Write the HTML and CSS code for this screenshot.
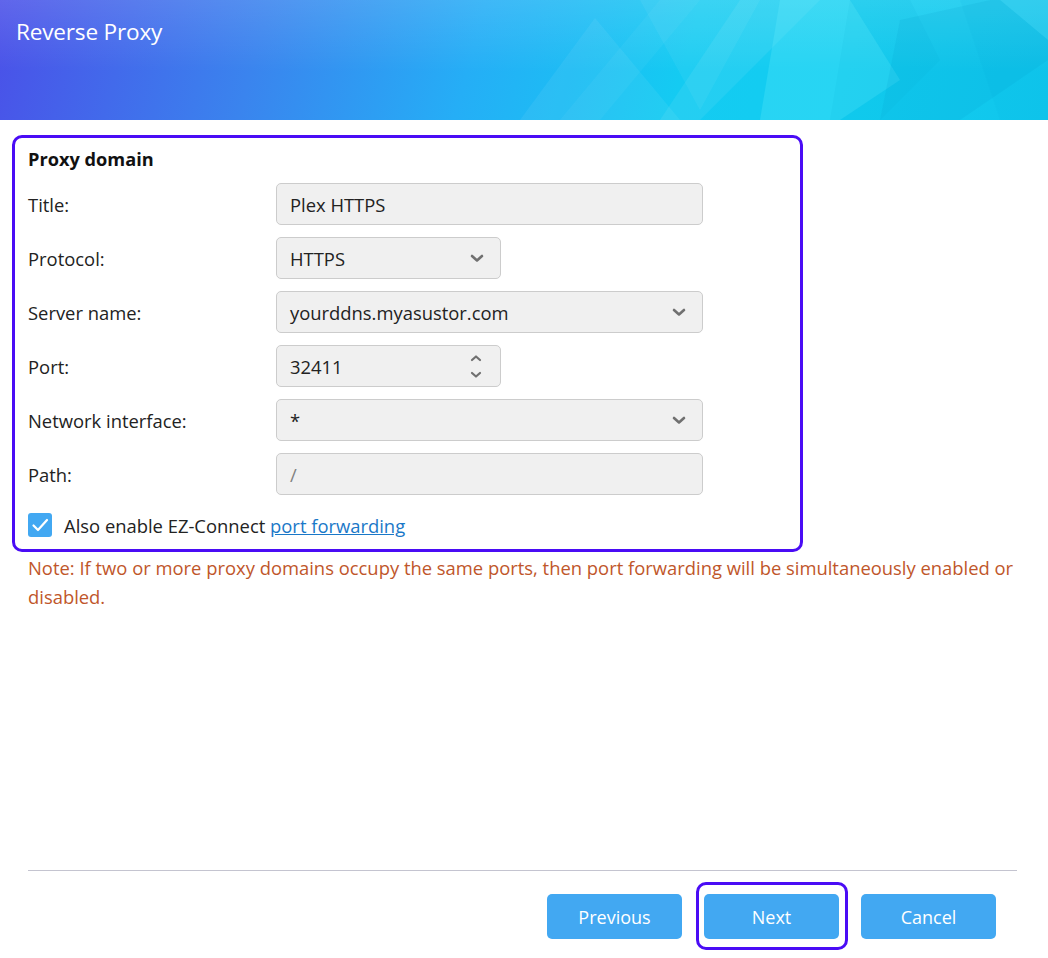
FILE: index.html
```html
<!DOCTYPE html>
<html>
<head>
<meta charset="utf-8">
<link rel="stylesheet" href="styles.css">
</head>
<body>
<div class="dialog">
  <header class="header">
    <svg class="header-art" width="1048" height="120" viewBox="0 0 1048 120" aria-hidden="true">
      <polygon points="595,18 520,120 680,120" fill="#ffffff" opacity="0.06"/>
      <polygon points="640,0 760,0 700,110" fill="#ffffff" opacity="0.05"/>
      <polygon points="740,0 820,0 700,120 660,120" fill="#ffffff" opacity="0.07"/>
      <polygon points="780,0 850,0 900,80 840,120 760,120" fill="#7ff6ff" opacity="0.20"/>
      <polygon points="850,0 910,0 940,60 880,120 830,120" fill="#00a0d0" opacity="0.08"/>
      <polygon points="900,20 990,0 1048,0 1048,60 960,120 880,120" fill="#0090c8" opacity="0.12"/>
      <polygon points="960,0 1048,0 1048,120 1000,120" fill="#00a8d8" opacity="0.08"/>
      <polygon points="1000,0 1048,0 1048,40" fill="#60e8ff" opacity="0.25"/>
      <polygon points="700,0 600,120 560,120 660,0" fill="#ffffff" opacity="0.04"/>
    </svg>
    <h1 class="title">Reverse Proxy</h1>
  </header>

  <main class="content">
    <section class="panel">
      <h2 class="panel-title">Proxy domain</h2>
      <div class="form">
        <div class="row">
          <label class="label">Title:</label>
          <div class="field wide"><span class="value">Plex HTTPS</span></div>
        </div>
        <div class="row">
          <label class="label">Protocol:</label>
          <div class="field narrow"><span class="value">HTTPS</span>
            <svg class="chev" width="14" height="9" viewBox="0 0 14 9"><path d="M2 2 L7 6.5 L12 2" fill="none" stroke="#707070" stroke-width="2.6" stroke-linecap="round" stroke-linejoin="round"/></svg>
          </div>
        </div>
        <div class="row">
          <label class="label">Server name:</label>
          <div class="field wide"><span class="value">yourddns.myasustor.com</span>
            <svg class="chev" width="14" height="9" viewBox="0 0 14 9"><path d="M2 2 L7 6.5 L12 2" fill="none" stroke="#707070" stroke-width="2.6" stroke-linecap="round" stroke-linejoin="round"/></svg>
          </div>
        </div>
        <div class="row">
          <label class="label">Port:</label>
          <div class="field narrow"><span class="value">32411</span>
            <span class="spinner">
              <svg width="12" height="8" viewBox="0 0 12 8"><path d="M2 6 L6 2.5 L10 6" fill="none" stroke="#707070" stroke-width="2.2" stroke-linecap="round" stroke-linejoin="round"/></svg>
              <svg width="12" height="8" viewBox="0 0 12 8"><path d="M2 2 L6 5.5 L10 2" fill="none" stroke="#707070" stroke-width="2.2" stroke-linecap="round" stroke-linejoin="round"/></svg>
            </span>
          </div>
        </div>
        <div class="row">
          <label class="label">Network interface:</label>
          <div class="field wide"><span class="value">*</span>
            <svg class="chev" width="14" height="9" viewBox="0 0 14 9"><path d="M2 2 L7 6.5 L12 2" fill="none" stroke="#707070" stroke-width="2.6" stroke-linecap="round" stroke-linejoin="round"/></svg>
          </div>
        </div>
        <div class="row">
          <label class="label">Path:</label>
          <div class="field wide"><span class="value placeholder">/</span></div>
        </div>
      </div>
      <div class="check-row">
        <span class="checkbox">
          <svg width="24" height="24" viewBox="0 0 24 24"><path d="M5.5 12.5 L10 17 L19 7" fill="none" stroke="#ffffff" stroke-width="2.2" stroke-linecap="round" stroke-linejoin="round"/></svg>
        </span>
        <span class="check-text">Also enable EZ-Connect <a class="link" href="#">port forwarding</a></span>
      </div>
    </section>
    <p class="note">Note: If two or more proxy domains occupy the same ports, then port forwarding will be simultaneously enabled or disabled.</p>
  </main>

  <footer class="footer">
    <div class="divider"></div>
    <div class="buttons">
      <button class="btn">Previous</button>
      <button class="btn btn-focus">Next</button>
      <button class="btn">Cancel</button>
    </div>
  </footer>
</div>
</body>
</html>
```

FILE: styles.css
```css
* { box-sizing: border-box; }
html, body { margin: 0; padding: 0; background: #ffffff; }
body {
  font-family: "Open Sans", "Noto Sans", "Liberation Sans", sans-serif;
  color: #222222;
}
.dialog {
  width: 1048px;
  height: 958px;
  display: flex;
  flex-direction: column;
}
.header {
  position: relative;
  height: 120px;
  flex: none;
  overflow: hidden;
  background:
    linear-gradient(180deg, rgba(255,255,255,0.12) 0%, rgba(255,255,255,0) 60%),
    linear-gradient(105deg, #4a50e8 0%, #3a84ee 25%, #25aef6 45%, #14cbf2 65%, #12cdf0 80%, #10c6ec 100%);
}
.header-art {
  position: absolute;
  left: 0;
  top: 0;
}
.title {
  position: relative;
  margin: 0;
  padding: 17px 0 0 16px;
  font-size: 22.6px;
  font-weight: 400;
  line-height: 30px;
  color: #ffffff;
  letter-spacing: -0.2px;
}
.content {
  flex: 1;
  padding: 15px 8px 0 12px;
}
.panel {
  width: 791px;
  border: 3px solid #4a0cf5;
  border-radius: 10px;
  padding: 8px 13px 11px 13px;
}
.panel-title {
  margin: 0;
  font-size: 18.2px;
  font-weight: 700;
  line-height: 26px;
  color: #111111;
}
.form {
  display: flex;
  flex-direction: column;
  gap: 12px;
  margin-top: 11px;
}
.row {
  display: flex;
  align-items: center;
  height: 42px;
}
.label {
  width: 248px;
  font-size: 18.4px;
  color: #222222;
}
.field {
  height: 42px;
  background: #f0f0f0;
  border: 1px solid #cccccc;
  border-radius: 5px;
  display: flex;
  align-items: center;
  justify-content: space-between;
  padding: 0 14px 0 13px;
}
.field.wide { width: 427px; }
.field.narrow { width: 225px; }
.value {
  font-size: 18.4px;
  color: #222222;
}
.value.placeholder { color: #808080; }
.chev { display: block; margin-right: 2px; }
.spinner {
  display: flex;
  flex-direction: column;
  gap: 9px;
  margin-right: 4px;
}
.spinner svg { display: block; }
.check-row {
  display: flex;
  align-items: center;
  margin-top: 17px;
  height: 26px;
}
.checkbox {
  width: 24px;
  height: 24px;
  border-radius: 3px;
  background: #42a8f2;
  display: flex;
  align-items: center;
  justify-content: center;
  margin-right: 12px;
}
.checkbox svg { display: block; }
.check-text {
  font-size: 18.4px;
  color: #222222;
}
.link {
  color: #1a78c8;
  text-decoration: underline;
}
.note {
  margin: 1px 0 0 16px;
  font-size: 18.4px;
  line-height: 29px;
  color: #c0562a;
}
.footer {
  flex: none;
  padding: 0 31px 19px 28px;
}
.divider {
  height: 1px;
  background: #c4c4d0;
}
.buttons {
  display: flex;
  justify-content: flex-end;
  gap: 22px;
  margin-top: 23px;
  padding-right: 21px;
}
.btn {
  position: relative;
  width: 135px;
  height: 45px;
  border: none;
  border-radius: 5px;
  background: #42a8f2;
  color: #ffffff;
  font-family: inherit;
  font-size: 18px;
  padding: 0;
}
.btn-focus::after {
  content: "";
  position: absolute;
  left: -8px;
  right: -9px;
  top: -12px;
  bottom: -11px;
  border: 3px solid #4a0cf5;
  border-radius: 10px;
}
```
